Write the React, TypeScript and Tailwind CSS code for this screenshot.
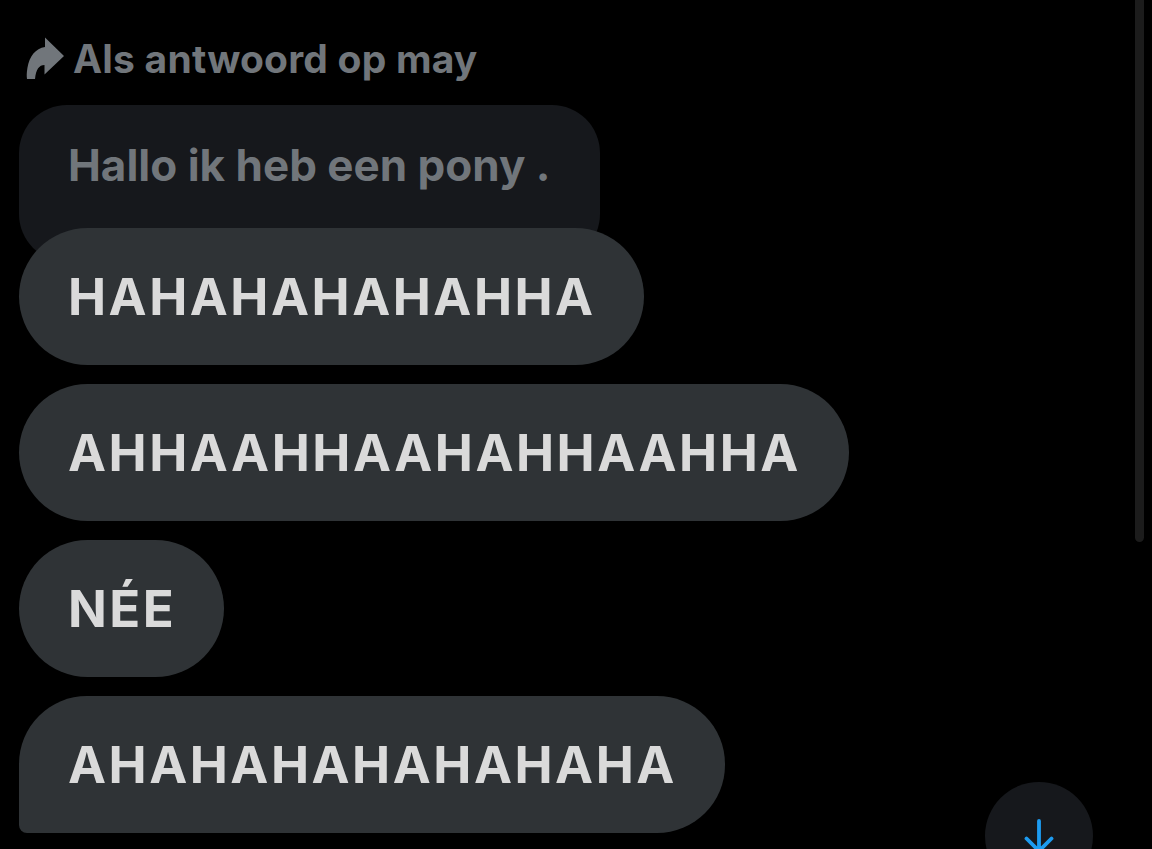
import React from "react";

function ReplyIcon() {
  return (
    <svg width="43" height="43" viewBox="0 0 43 43" className="shrink-0">
      <path
        d="M23 0.5 L42 19 L22.5 37.5 L22.5 28 C17 28.2 14.2 32 13 42 L5 42 C4.6 39 4.6 36 5.4 31 C7.5 19 13.5 11.5 23 10 Z"
        fill="#71767b"
      />
    </svg>
  );
}

function Bubble({ text, last }: { text: string; last?: boolean }) {
  return (
    <div
      className={
        "inline-flex h-[137px] items-center self-start bg-[#2f3336] pl-[49px] pr-[48px] " +
        (last ? "rounded-[68px] rounded-bl-[8px]" : "rounded-full")
      }
    >
      <span className="text-[51px] font-bold leading-none tracking-[2.5px] text-[#dadada] [font-family:Inter,Roboto,sans-serif]">
        {text}
      </span>
    </div>
  );
}

export default function App() {
  return (
    <div className="relative h-[849px] w-[1152px] overflow-hidden bg-black [font-family:Inter,Roboto,sans-serif]">
      <div className="flex flex-col pl-[19px] pt-[35px]">
        <div className="flex h-[46px] items-center gap-[8px] pl-[3px]">
          <ReplyIcon />
          <span className="text-[39px] font-bold leading-none tracking-[0.2px] text-[#71767b]">Als antwoord op may</span>
        </div>
        <div className="mt-[24px] h-[157px] w-[581px] rounded-[48px] bg-[#16181c] pl-[49px] pt-[38px]">
          <span className="text-[44px] font-bold leading-none text-[#71767b]">Hallo ik heb een pony .</span>
        </div>
        <div className="-mt-[34px] flex flex-col gap-[19px]">
          <Bubble text="HAHAHAHAHAHHA" />
          <Bubble text="AHHAAHHAAHAHHAAHHA" />
          <Bubble text="NÉE" />
          <Bubble text="AHAHAHAHAHAHAHA" last />
        </div>
      </div>

      <div className="absolute right-[8px] top-0 h-[542px] w-[9px] rounded-b-full bg-[#1c1c1c]" />

      <div className="absolute left-[985px] top-[782px] flex h-[108px] w-[108px] items-start justify-center rounded-full bg-[#16181c]">
        <svg width="40" height="40" viewBox="0 0 24 24" className="mt-[34px]">
          <path d="M12 3 V21 M4.5 13.5 L12 21 L19.5 13.5" fill="none" stroke="#1d9bf0" strokeWidth="2.3" strokeLinecap="round" strokeLinejoin="round" />
        </svg>
      </div>
    </div>
  );
}
